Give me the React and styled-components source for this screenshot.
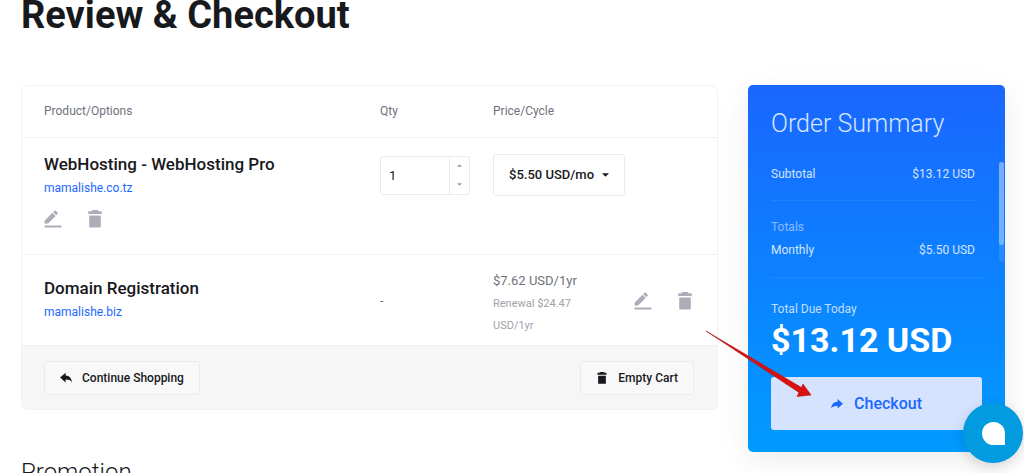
import React, { useState } from "react";
import styled, { createGlobalStyle } from "styled-components";

const PencilIcon = () => (
  <svg width="18" height="18" viewBox="0 0 18 18" fill="currentColor" aria-hidden="true">
    <path d="M0.8 10.4 8.4 2.8 11.6 6 4.4 13.2Q4 13.6 3.4 13.6L1.4 13.8Q0.6 13.8 0.6 13V11Q0.6 10.6 0.8 10.4Z" />
    <path d="M9.1 2.1 10.5 0.7Q11.2 0.1 11.9 0.7L13.6 2.4Q14.2 3.1 13.6 3.8L12.2 5.3Z" />
    <rect x="0.5" y="15.6" width="17" height="2" rx="0.4" />
  </svg>
);

const TrashIcon = ({ size = 18 }) => (
  <svg width={size} height={size} viewBox="0 0 18 18" fill="currentColor" aria-hidden="true">
    <path d="M6.4 0H11.6L12.6 1.2H15Q15.8 1.2 15.8 2V4H2.2V2Q2.2 1.2 3 1.2H5.4Z" />
    <path d="M3.2 5.6H14.8V16.8Q14.8 17.6 14 17.6H4Q3.2 17.6 3.2 16.8Z" />
  </svg>
);

const ReplyIcon = () => (
  <svg width="12" height="12" viewBox="0 0 12 12" fill="currentColor" aria-hidden="true">
    <path d="M5.6 0.8V3.4C9.4 3.6 11.6 6 11.9 10.4C10.6 8.3 9 7.6 5.6 7.6V10.4L0.1 5.6Z" />
  </svg>
);

const ShareIcon = () => (
  <svg width="12" height="12" viewBox="0 0 12 12" fill="currentColor" aria-hidden="true">
    <path d="M6.6 1V3.7C2.8 3.9 0.5 6.2 0.1 10.4C1.5 8.5 3.4 7.9 6.6 7.9V10.6L11.9 5.8Z" />
  </svg>
);

const Caret = ({ width, height, up }) => (
  <svg width={width} height={height} viewBox="0 0 8 4" fill="currentColor" aria-hidden="true">
    <path d={up ? "M0 4 4 0 8 4Z" : "M0 0H8L4 4Z"} />
  </svg>
);

const RowActions = ({ spaced }) => (
  <Actions $spaced={spaced}>
    <IconButton type="button" aria-label="Edit">
      <PencilIcon />
    </IconButton>
    <IconButton type="button" aria-label="Remove">
      <TrashIcon />
    </IconButton>
  </Actions>
);

const App = () => {
  const [qty, setQty] = useState(1);

  return (
    <>
      <GlobalStyle />
      <Page>
        <Title>Review &amp; Checkout</Title>
        <Columns>
          <main>
            <Cart>
              <CartTable>
                <thead>
                  <tr>
                    <HeadCell $width="336px" $first>Product/Options</HeadCell>
                    <HeadCell $width="113px">Qty</HeadCell>
                    <HeadCell $width="120px">Price/Cycle</HeadCell>
                    <HeadCell aria-label="Actions" />
                  </tr>
                </thead>
                <tbody>
                  <tr>
                    <ProductCell>
                      <ProductName>WebHosting - WebHosting Pro</ProductName>
                      <DomainLink href="#">mamalishe.co.tz</DomainLink>
                      <RowActions spaced />
                    </ProductCell>
                    <Cell>
                      <Stepper>
                        <QtyInput
                          aria-label="Quantity"
                          value={qty}
                          onChange={(e) => setQty(Number(e.target.value) || 0)}
                        />
                        <StepButtons>
                          <StepButton type="button" aria-label="Increase" onClick={() => setQty(qty + 1)}>
                            <Caret width={5} height={3} up />
                          </StepButton>
                          <StepButton type="button" aria-label="Decrease" onClick={() => setQty(Math.max(0, qty - 1))}>
                            <Caret width={5} height={3} />
                          </StepButton>
                        </StepButtons>
                      </Stepper>
                    </Cell>
                    <Cell colSpan={2}>
                      <CycleWrap>
                        <CycleSelect aria-label="Billing cycle" defaultValue="monthly">
                          <option value="monthly">$5.50 USD/mo</option>
                        </CycleSelect>
                        <CycleCaret>
                          <Caret width={7} height={4} />
                        </CycleCaret>
                      </CycleWrap>
                    </Cell>
                  </tr>
                  <tr>
                    <ProductCell $middle>
                      <ProductName>Domain Registration</ProductName>
                      <DomainLink href="#">mamalishe.biz</DomainLink>
                    </ProductCell>
                    <Cell $middle>-</Cell>
                    <PriceCell>
                      <Price>$7.62 USD/1yr</Price>
                      <Renewal>Renewal $24.47 USD/1yr</Renewal>
                    </PriceCell>
                    <ActionsCell $middle>
                      <RowActions />
                    </ActionsCell>
                  </tr>
                </tbody>
              </CartTable>
              <CartFooter>
                <FooterButton type="button">
                  <ReplyIcon />
                  Continue Shopping
                </FooterButton>
                <FooterButton type="button">
                  <TrashIcon size={12} />
                  Empty Cart
                </FooterButton>
              </CartFooter>
            </Cart>
            <SectionTitle>Promotion</SectionTitle>
          </main>

          <Summary>
            <SummaryTitle>Order Summary</SummaryTitle>
            <SummaryList>
              <SummaryRow>
                <span>Subtotal</span>
                <span>$13.12 USD</span>
              </SummaryRow>
              <Totals>
                <Muted>Totals</Muted>
                <SummaryRow>
                  <span>Monthly</span>
                  <span>$5.50 USD</span>
                </SummaryRow>
              </Totals>
              <ScrollTrack>
                <ScrollThumb />
              </ScrollTrack>
            </SummaryList>
            <Due>
              <DueLabel>Total Due Today</DueLabel>
              <DueAmount>$13.12 USD</DueAmount>
              <CheckoutButton type="button">
                <ShareIcon />
                Checkout
              </CheckoutButton>
            </Due>
          </Summary>
        </Columns>
      </Page>

      <Pointer width="112" height="74" viewBox="0 0 112 74" aria-hidden="true">
        <path d="M2 4 97.5 60.5 99 57 107 68 93 69.5 95 65.5Z" fill="#d9100f" stroke="#b01414" strokeWidth="0.6" strokeLinejoin="round" />
      </Pointer>
      <ChatButton type="button" aria-label="Chat">
        <ChatMark />
      </ChatButton>
    </>
  );
};

const GlobalStyle = createGlobalStyle`
  * {
    box-sizing: border-box;
  }

  body {
    margin: 0;
    overflow: hidden;
    background: #fff;
    color: #17191d;
    font-family: Roboto, "Liberation Sans", sans-serif;
    font-size: 12px;
  }

  button, input, select {
    font-family: inherit;
  }
`;

const Page = styled.div`
  position: relative;
  padding: 0 19px 0 21px;
`;

const Title = styled.h1`
  margin: 0 0 55px;
  font-size: 38px;
  font-weight: 700;
  line-height: 30px;
`;

const Columns = styled.div`
  display: grid;
  grid-template-columns: minmax(0, 1fr) 257px;
  align-items: start;
  gap: 30px;
`;

const Cart = styled.section`
  border: 1px solid #f2f2f3;
  border-radius: 6px;
  overflow: hidden;
`;

const CartTable = styled.table`
  width: 100%;
  table-layout: fixed;
  border-collapse: collapse;
`;

const HeadCell = styled.th`
  width: ${({ $width, $first }) => ($first ? `calc(${$width} + 22px)` : $width || "auto")};
  height: 51px;
  padding: 0 0 0 ${({ $first }) => ($first ? "22px" : "0")};
  color: #6f727b;
  font-weight: 400;
  text-align: left;
`;

const Cell = styled.td`
  padding: ${({ $middle }) => ($middle ? "10px 0 8px" : "16px 0 0")};
  border-top: 1px solid #f2f2f3;
  color: #6f727b;
  vertical-align: ${({ $middle }) => ($middle ? "middle" : "top")};
`;

const ProductCell = styled(Cell)`
  padding: ${({ $middle }) => ($middle ? "10px 0 8px 22px" : "15px 0 26px 22px")};
`;

const PriceCell = styled(Cell)`
  padding: 14px 0 8px;
`;

const ActionsCell = styled(Cell)`
  padding-right: 23px;
`;

const ProductName = styled.div`
  color: #17191d;
  font-size: 17px;
  font-weight: 500;
  line-height: 22px;
`;

const DomainLink = styled.a`
  display: block;
  color: #1b68ff;
  line-height: 26px;
  text-decoration: none;
`;

const Actions = styled.div`
  display: flex;
  justify-content: ${({ $spaced }) => ($spaced ? "flex-start" : "flex-end")};
  gap: 24px;
  margin-top: ${({ $spaced }) => ($spaced ? "9px" : "0")};
`;

const IconButton = styled.button`
  display: flex;
  padding: 0;
  border: 0;
  background: none;
  color: #abaeb9;
`;

const Stepper = styled.div`
  display: flex;
  width: 90px;
  height: 39px;
  margin-top: 2px;
  border: 1px solid #ebebed;
  border-radius: 3px;
`;

const QtyInput = styled.input`
  flex: 1;
  min-width: 0;
  padding: 0 8px;
  border: 0;
  background: none;
  color: #17191d;
  font-size: 13px;
`;

const StepButtons = styled.div`
  display: flex;
  flex-direction: column;
  width: 20px;
  border-left: 1px solid #ebebed;
`;

const StepButton = styled.button`
  display: flex;
  flex: 1;
  align-items: center;
  justify-content: center;
  padding: 0;
  border: 0;
  background: none;
  color: #9a9da8;
`;

const CycleWrap = styled.div`
  position: relative;
  width: 132px;
`;

const CycleSelect = styled.select`
  appearance: none;
  display: block;
  width: 100%;
  height: 42px;
  padding: 0 15px;
  border: 1px solid #ebebed;
  border-radius: 3px;
  background: #fff;
  color: #17191d;
  font-size: 13px;
  font-weight: 500;
`;

const CycleCaret = styled.span`
  position: absolute;
  top: 0;
  right: 16px;
  display: flex;
  align-items: center;
  height: 100%;
  color: #17191d;
  pointer-events: none;
`;

const Price = styled.div`
  font-size: 13px;
  line-height: 24px;
`;

const Renewal = styled.div`
  width: 100px;
  color: #a0a2a9;
  font-size: 11px;
  line-height: 22px;
`;

const CartFooter = styled.div`
  display: flex;
  justify-content: space-between;
  padding: 15px 23px 14px 22px;
  border-top: 1px solid #f0f0f1;
  background: #f6f6f7;
`;

const FooterButton = styled.button`
  display: flex;
  align-items: center;
  gap: 10px;
  height: 34px;
  padding: 0 15px;
  border: 1px solid #ececee;
  border-radius: 3px;
  background: #f8f8f8;
  color: #17191d;
  font-size: 12px;
  font-weight: 500;
`;

const SectionTitle = styled.h2`
  margin: 46px 0 0;
  font-size: 24px;
  font-weight: 300;
  line-height: 32px;
`;

const Summary = styled.aside`
  padding: 23px 23px 22px;
  border-radius: 5px;
  background: linear-gradient(#1a66ff, #009bff);
  box-shadow: 0 8px 30px rgba(0, 0, 0, 0.08);
  color: #d5e5ff;
`;

const SummaryTitle = styled.h2`
  margin: 0;
  font-size: 25px;
  font-weight: 300;
  line-height: 32px;
`;

const SummaryList = styled.div`
  position: relative;
  margin: 22px 0 15px;
  padding-right: 7px;
`;

const SummaryRow = styled.div`
  display: flex;
  justify-content: space-between;
  line-height: 24px;
`;

const Totals = styled.div`
  margin-top: 14px;
  padding-top: 15px;
  border-top: 1px solid rgba(255, 255, 255, 0.08);
`;

const Muted = styled.div`
  color: #8cbcff;
  line-height: 22px;
`;

const ScrollTrack = styled.div`
  position: absolute;
  top: 0;
  right: -22px;
  width: 5px;
  height: 100px;
  border-radius: 3px;
  background: rgba(255, 255, 255, 0.1);
`;

const ScrollThumb = styled.div`
  height: 83px;
  border-radius: 3px;
  background: rgba(255, 255, 255, 0.35);
`;

const Due = styled.div`
  padding-top: 19px;
  border-top: 1px solid rgba(255, 255, 255, 0.08);
`;

const DueLabel = styled.div`
  color: #c4deff;
  line-height: 24px;
`;

const DueAmount = styled.div`
  color: #fff;
  font-size: 34px;
  font-weight: 700;
  line-height: 38px;
`;

const CheckoutButton = styled.button`
  display: flex;
  align-items: center;
  justify-content: center;
  gap: 11px;
  width: 100%;
  height: 53px;
  margin-top: 18px;
  border: 0;
  border-radius: 3px;
  background: #d6e3ff;
  color: #1b68ff;
  font-size: 16px;
  font-weight: 500;
`;

const Pointer = styled.svg`
  position: absolute;
  top: 327px;
  left: 704px;
  pointer-events: none;
`;

const ChatButton = styled.button`
  position: fixed;
  right: 1px;
  bottom: 10px;
  display: flex;
  align-items: center;
  justify-content: center;
  width: 60px;
  height: 60px;
  padding: 0;
  border: 0;
  border-radius: 50%;
  background: #029be0;
  box-shadow: 0 4px 14px rgba(0, 0, 0, 0.15);
`;

const ChatMark = styled.span`
  width: 23px;
  height: 23px;
  border-radius: 50% 50% 1px 50%;
  background: #fff;
`;

export default App;
